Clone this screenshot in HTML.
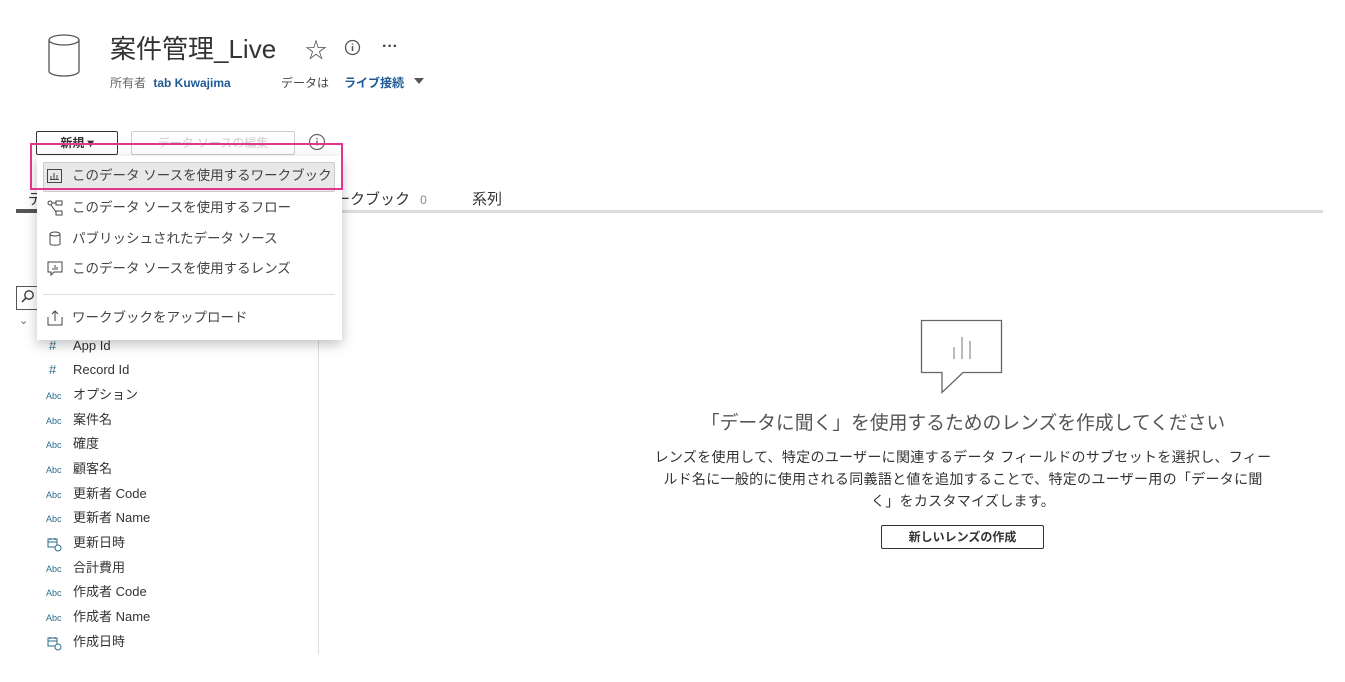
<!DOCTYPE html>
<html><head><meta charset="utf-8"><style>
*{margin:0;padding:0;box-sizing:border-box}
body{width:1345px;height:682px;background:#fff;position:relative;overflow:hidden;font-family:"Liberation Sans","Noto Sans CJK JP",sans-serif;color:#333}
.a{position:absolute;white-space:nowrap}
.blue{color:#1f5a96}
.f{position:absolute;left:46px;font-size:13px;color:#333;height:20px;line-height:20px}
.f .i{display:inline-block;width:27px;font-size:9px;color:#2c6d8e}
.f svg{vertical-align:middle;margin-right:11px}
.mi{position:absolute;left:46px;font-size:13.5px;color:#444;line-height:20px}
.mi svg{vertical-align:middle;margin-right:8px}
</style></head><body>
<svg class="a" style="left:47px;top:34px" width="34" height="43" viewBox="0 0 34 43"><ellipse cx="17" cy="6" rx="15" ry="5" fill="none" stroke="#555" stroke-width="1.3"/><path d="M2 6v31c0 3 7 5 15 5s15-2 15-5V6" fill="none" stroke="#555" stroke-width="1.3"/></svg>
<div class="a" style="left:110px;top:29px;font-size:26px;color:#333">案件管理_Live</div>
<div class="a" style="left:305px;top:33px;font-size:22px;color:#555">☆</div>
<svg class="a" style="left:344px;top:39px" width="17" height="17"><circle cx="8.5" cy="8.5" r="7" fill="none" stroke="#555" stroke-width="1.3"/><path d="M8.5 7v5M8.5 4.5v1.3" stroke="#555" stroke-width="1.5"/></svg>
<div class="a" style="left:382px;top:38px;font-size:16px;color:#444;font-weight:bold">···</div>
<div class="a" style="left:110px;top:74px;font-size:12px;color:#666">所有者 <b class="blue" style="margin-left:4px">tab Kuwajima</b></div>
<div class="a" style="left:281px;top:74px;font-size:12px;color:#444">データは</div>
<div class="a blue" style="left:344px;top:74px;font-size:12px;font-weight:bold">ライブ接続</div>
<div class="a" style="left:414px;top:78px;width:0;height:0;border-left:5px solid transparent;border-right:5px solid transparent;border-top:6px solid #555"></div>
<div class="a" style="left:36px;top:131px;width:82px;height:24px;border:1px solid #333;border-radius:2px;font-size:12px;font-weight:bold;text-align:center;line-height:22px">新規 ▾</div>
<div class="a" style="left:131px;top:131px;width:164px;height:24px;border:1px solid #ccc;border-radius:2px;font-size:12px;color:#ccc;text-align:center;line-height:22px">データ ソースの編集</div>
<svg class="a" style="left:308px;top:133px" width="18" height="18"><circle cx="9" cy="9" r="7.5" fill="none" stroke="#666" stroke-width="1.2"/><path d="M9 7.5v5M9 5v1.3" stroke="#666" stroke-width="1.4"/></svg>
<div class="a" style="left:16px;top:210px;width:1307px;height:3px;background:#ddd"></div>
<div class="a" style="left:16px;top:209px;width:60px;height:4px;background:#555"></div>
<div class="a" style="left:28px;top:188px;font-size:15px;color:#333">デ</div>
<div class="a" style="left:335px;top:188px;font-size:15px;color:#333">ークブック <span style="font-size:12px;color:#888;margin-left:6px">0</span></div>
<div class="a" style="left:472px;top:188px;font-size:15px;color:#333">系列</div>
<div class="a" style="left:16px;top:286px;width:25px;height:24px;border:1px solid #555"></div>
<svg class="a" style="left:20px;top:289px" width="16" height="16"><circle cx="9" cy="6" r="4.2" fill="none" stroke="#333" stroke-width="1.3"/><path d="M6 9l-4 4" stroke="#333" stroke-width="1.5"/></svg>
<div class="a" style="left:19px;top:314px;font-size:11px;color:#666">⌄</div>
<div class="a" style="left:318px;top:335px;width:1px;height:320px;background:#ddd"></div>
<div class="f" style="top:336px"><span class="i" style="font-size:13px;padding-left:3px">#</span>App Id</div>
<div class="f" style="top:360px"><span class="i" style="font-size:13px;padding-left:3px">#</span>Record Id</div>
<div class="f" style="top:385px"><span class="i">Abc</span>オプション</div>
<div class="f" style="top:410px"><span class="i">Abc</span>案件名</div>
<div class="f" style="top:434px"><span class="i">Abc</span>確度</div>
<div class="f" style="top:459px"><span class="i">Abc</span>顧客名</div>
<div class="f" style="top:484px"><span class="i">Abc</span>更新者 Code</div>
<div class="f" style="top:508px"><span class="i">Abc</span>更新者 Name</div>
<div class="f" style="top:533px"><svg width="16" height="16"><path d="M2 3h9v8H2zM2 6h9M4 2v2M9 2v2" fill="none" stroke="#2c6d8e"/><circle cx="12" cy="12" r="3" fill="#fff" stroke="#2c6d8e"/></svg>更新日時</div>
<div class="f" style="top:558px"><span class="i">Abc</span>合計費用</div>
<div class="f" style="top:582px"><span class="i">Abc</span>作成者 Code</div>
<div class="f" style="top:607px"><span class="i">Abc</span>作成者 Name</div>
<div class="f" style="top:632px"><svg width="16" height="16"><path d="M2 3h9v8H2zM2 6h9M4 2v2M9 2v2" fill="none" stroke="#2c6d8e"/><circle cx="12" cy="12" r="3" fill="#fff" stroke="#2c6d8e"/></svg>作成日時</div>
<div class="a" style="left:37px;top:156px;width:305px;height:184px;background:#fff;box-shadow:0 4px 12px rgba(0,0,0,.25)"></div>
<div class="a" style="left:43px;top:162px;width:292px;height:30px;background:#e8e8e8;border:1px solid #ccc;border-radius:2px"></div>
<div class="mi" style="top:166px"><svg width="18" height="18"><rect x="1.5" y="2.5" width="14" height="13" fill="none" stroke="#444"/><path d="M5 12V9M8 12V6M11 12V8M4 12.5h9" stroke="#444"/></svg>このデータ ソースを使用するワークブック</div>
<div class="mi" style="top:198px"><svg width="18" height="18"><circle cx="4" cy="4" r="2" fill="none" stroke="#444"/><rect x="10" y="2" width="6" height="4" fill="none" stroke="#444"/><rect x="10" y="12" width="6" height="4" fill="none" stroke="#444"/><path d="M6 4h4M5 6l5 7" stroke="#444" fill="none"/></svg>このデータ ソースを使用するフロー</div>
<div class="mi" style="top:229px"><svg width="18" height="18"><ellipse cx="9" cy="4" rx="5" ry="2" fill="none" stroke="#444"/><path d="M4 4v10c0 1.5 10 1.5 10 0V4" fill="none" stroke="#444"/></svg>パブリッシュされたデータ ソース</div>
<div class="mi" style="top:259px"><svg width="18" height="18"><path d="M2 2h14v10H8l-3 3v-3H2z" fill="none" stroke="#444"/><path d="M7 10V8M9 10V5M11 10V7" stroke="#444"/></svg>このデータ ソースを使用するレンズ</div>
<div class="a" style="left:43px;top:294px;width:292px;height:1px;background:#ddd"></div>
<div class="mi" style="top:308px"><svg width="18" height="18"><path d="M2 8v8h14V8M9 12V2M6 5l3-3 3 3" fill="none" stroke="#444"/></svg>ワークブックをアップロード</div>
<div class="a" style="left:30px;top:143px;width:313px;height:47px;border:2px solid #e3358f"></div>
<svg class="a" style="left:920px;top:319px" width="84" height="75"><path d="M1.5 1.5h80v52H43l-21 20v-20H1.5z" fill="none" stroke="#666" stroke-width="1.3"/><path d="M34 40V28M42 40V18M50 40V22" stroke="#bbb" stroke-width="2"/></svg>
<div class="a" style="left:0;width:1926px;top:408px;text-align:center;font-size:18.8px;color:#555">「データに聞く」を使用するためのレンズを作成してください</div>
<div class="a" style="left:600px;top:446px;width:726px;text-align:center;font-size:14px;letter-spacing:0.3px;line-height:22px;color:#333">レンズを使用して、特定のユーザーに関連するデータ フィールドのサブセットを選択し、フィー<br>ルド名に一般的に使用される同義語と値を追加することで、特定のユーザー用の「データに聞<br>く」をカスタマイズします。</div>
<div class="a" style="left:881px;top:525px;width:163px;height:24px;border:1px solid #333;border-radius:2px;text-align:center;font-size:12px;font-weight:bold;line-height:22px">新しいレンズの作成</div>
</body></html>
